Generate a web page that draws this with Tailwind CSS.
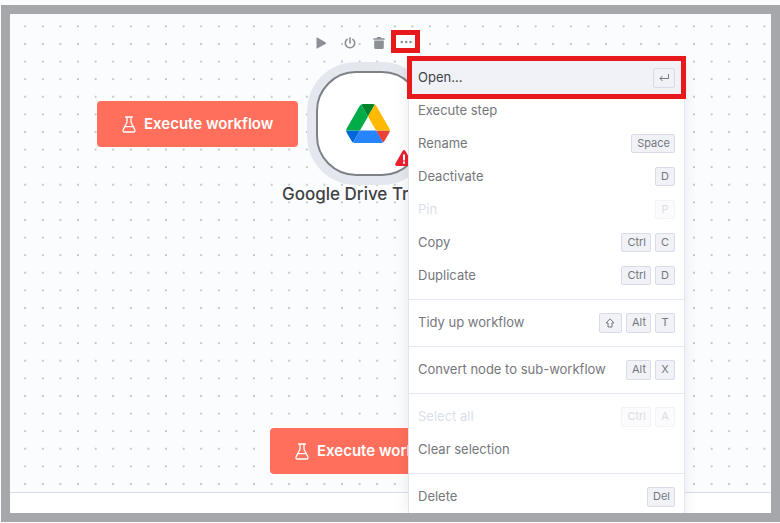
<!DOCTYPE html>
<html lang="en">
<head>
  <meta charset="utf-8">
  <meta name="viewport" content="width=device-width, initial-scale=1">
  <title>Workflow editor</title>
  <script src="https://cdn.jsdelivr.net/npm/@tailwindcss/browser@4"></script>
</head>
<body class="flex h-screen flex-col overflow-hidden bg-[#fbfcfe] pt-[5px] pb-px pl-px font-['Inter',sans-serif]">
  <svg class="hidden">
    <symbol id="flask" viewBox="0 0 14 17">
      <path d="M3.6 1h6.800M5 1v5.200L1.200 13.600Q.4 16 2.600 16h8.800q2.200 0 1.400-2.400L9 6.200V1M3 10.600h8" fill="none" stroke="currentColor" stroke-width="1.3" stroke-linejoin="round" stroke-linecap="round" />
    </symbol>
  </svg>

  <div class="relative flex min-h-0 flex-1 flex-col overflow-hidden border-[9px] border-[#a6a7ab] bg-white">
    <main class="relative flex-1 overflow-hidden border-b border-[#d9dce8] bg-[#fbfcfe]">
      <svg class="absolute inset-0 size-full" aria-hidden="true">
        <defs>
          <pattern id="grid" x="6.4" y="3.5" width="17.6" height="17.6" patternUnits="userSpaceOnUse">
            <circle cx="8.8" cy="8.8" r=".85" fill="#94969e" />
          </pattern>
        </defs>
        <rect width="100%" height="100%" fill="url(#grid)" />
      </svg>

      <!-- canvas buttons -->
      <button class="absolute top-[87px] left-[87px] flex h-[46px] items-center gap-2 rounded bg-[#ff6f5c] px-[25px] font-semibold text-white">
        <svg class="h-[17px] w-[14px]"><use href="#flask" /></svg>
        <span class="text-[15px] whitespace-nowrap">Execute workflow</span>
      </button>
      <button class="absolute top-[414px] left-[260px] flex h-[46px] items-center gap-2 rounded bg-[#ff6f5c] px-[25px] font-semibold text-white">
        <svg class="h-[17px] w-[14px]"><use href="#flask" /></svg>
        <span class="text-[15px] whitespace-nowrap">Execute workflow</span>
      </button>

      <!-- node toolbar -->
      <div class="absolute top-[16px] left-[302px] flex items-center text-[#8d8f96]">
        <button class="flex h-[26px] w-[29px] items-center pl-[3px]" aria-label="Execute step">
          <svg class="size-3" viewBox="0 0 12 12"><path d="M1.500 1v10q0 .8.8.4l8.500-5q.6-.4 0-.8l-8.500-5Q1.500.2 1.500 1z" fill="currentColor" /></svg>
        </button>
        <button class="flex h-[26px] w-[29px] items-center pl-[3px]" aria-label="Deactivate">
          <svg class="size-3" viewBox="0 0 12 12" fill="none" stroke="currentColor" stroke-width="1.6" stroke-linecap="round"><path d="M6 .9v5M3.1 2.4a4.7 4.7 0 1 0 5.8 0" /></svg>
        </button>
        <button class="flex h-[26px] w-[29px] items-center pl-[3px]" aria-label="Delete">
          <svg class="size-3" viewBox="0 0 12 12" fill="currentColor"><path d="M.3 1.200h3.200L4.200.1h3.600l.7 1.100h3.200v1.500H.3zM1.200 3.500h9.600v7q0 1.500-1.500 1.500H2.700q-1.500 0-1.500-1.500z" /></svg>
        </button>
      </div>
      <button class="absolute top-[16px] left-[381px] flex h-[23px] w-[29px] items-center justify-center border-[5px] border-[#e8191c] bg-[#fbfcfe] pt-px text-[#8d8f96]" aria-label="More actions">
        <svg class="h-1 w-3 shrink-0" viewBox="0 0 12 4" fill="currentColor"><circle cx="1.8" cy="2" r="1.3" /><circle cx="6.2" cy="2" r="1.3" /><circle cx="10.6" cy="2" r="1.3" /></svg>
      </button>

      <!-- node -->
      <div class="absolute top-[57px] left-[306px] flex h-[105px] w-[106px] items-center justify-center rounded-[40px] border-2 border-[#7e8186] bg-white pr-[2px] shadow-[0_0_0_9px_#e5e7ef]">
        <svg class="h-[39px] w-[44px]" viewBox="0 0 87.3 78">
          <path d="m6.6 66.85 3.85 6.65c.8 1.4 1.95 2.5 3.3 3.3l13.75-23.8h-27.5c0 1.55.4 3.1 1.2 4.5z" fill="#0066da" />
          <path d="m43.65 25-13.75-23.8c-1.35.8-2.5 1.9-3.3 3.3l-25.4 44a9.06 9.06 0 0 0 -1.2 4.5h27.5z" fill="#00ac47" />
          <path d="m73.55 76.8c1.35-.8 2.5-1.9 3.3-3.3l1.6-2.75 7.65-13.25c.8-1.4 1.2-2.95 1.2-4.5h-27.502l5.852 11.5z" fill="#ea4335" />
          <path d="m43.65 25 13.75-23.8c-1.35-.8-2.9-1.2-4.5-1.2h-18.5c-1.6 0-3.15.45-4.5 1.2z" fill="#00832d" />
          <path d="m59.8 53h-32.3l-13.75 23.8c1.35.8 2.9 1.2 4.5 1.2h50.8c1.6 0 3.15-.45 4.5-1.2z" fill="#2684fc" />
          <path d="m73.4 26.5-12.7-22c-.8-1.4-1.95-2.5-3.3-3.3l-13.75 23.8 16.15 28h27.45c0-1.55-.4-3.1-1.2-4.5z" fill="#ffba00" />
        </svg>
        <svg class="absolute right-[7px] bottom-2 h-4 w-[18px]" viewBox="0 0 18 16">
          <path d="M7.6 1Q9-.8 10.4 1l7.2 12.5Q18.300 16 16 16H2Q-.3 16 .4 13.500z" fill="#ea1f30" />
          <path d="M9 5.200v4.600M9 12.300v.6" stroke="#fff" stroke-width="2" stroke-linecap="round" />
        </svg>
      </div>
      <p class="absolute top-[168px] left-[272px] text-[17px] leading-6 font-medium whitespace-nowrap text-[#414244]">Google Drive Trigger</p>
    </main>
    <footer class="h-5 bg-white"></footer>

    <!-- context menu -->
    <div class="absolute top-[46px] left-[398px] w-[277px] border border-[#e3e5f0] bg-white text-[13px] text-[#75777d] shadow-[0_2px_14px_rgba(0,0,0,0.08)]">
      <ul>
        <li class="relative">
          <button class="flex h-[33px] w-full items-center justify-between bg-[#f1f2f8] px-[9px] text-[#414244]">
            Open...
            <kbd class="flex h-5 w-[22px] items-center justify-center rounded-xs border border-[#d9dce8] bg-[#f1f2f8] text-[#75777d]">
              <svg class="h-2 w-[10px]" viewBox="0 0 10 8" fill="none" stroke="currentColor"><path d="M9.500 0v4.500H1M3.500 2L1 4.500 3.500 7" /></svg>
            </kbd>
          </button>
          <span class="pointer-events-none absolute -inset-x-[2px] -inset-y-[5px] border-[5px] border-[#e8191c]"></span>
        </li>
        <li>
          <button class="flex h-[33px] w-full items-center justify-between px-[9px]">Execute step</button>
        </li>
        <li>
          <button class="flex h-[33px] w-full items-center justify-between px-[9px]">
            Rename
            <kbd class="flex h-[19px] items-center rounded-xs border border-[#d9dce8] bg-[#f1f2f8] pr-1 pl-[5px] font-['Inter',sans-serif] text-[11px]">Space</kbd>
          </button>
        </li>
        <li>
          <button class="flex h-[33px] w-full items-center justify-between px-[9px]">
            Deactivate
            <kbd class="flex h-[19px] w-5 items-center justify-center rounded-xs border border-[#d9dce8] bg-[#f1f2f8] font-['Inter',sans-serif] text-[11px]">D</kbd>
          </button>
        </li>
        <li>
          <button class="flex h-[33px] w-full items-center justify-between px-[9px] text-[#dadfe9]" disabled>
            Pin
            <kbd class="flex h-[19px] w-5 items-center justify-center rounded-xs border border-[#f2f3f7] bg-[#fbfbfd] font-['Inter',sans-serif] text-[11px] text-[#dcdde0]">P</kbd>
          </button>
        </li>
        <li>
          <button class="flex h-[33px] w-full items-center justify-between px-[9px]">
            Copy
            <span class="flex gap-1">
              <kbd class="flex h-[19px] items-center rounded-xs border border-[#d9dce8] bg-[#f1f2f8] pr-1 pl-[5px] font-['Inter',sans-serif] text-[11px]">Ctrl</kbd>
              <kbd class="flex h-[19px] w-5 items-center justify-center rounded-xs border border-[#d9dce8] bg-[#f1f2f8] font-['Inter',sans-serif] text-[11px]">C</kbd>
            </span>
          </button>
        </li>
        <li>
          <button class="flex h-[33px] w-full items-center justify-between px-[9px]">
            Duplicate
            <span class="flex gap-1">
              <kbd class="flex h-[19px] items-center rounded-xs border border-[#d9dce8] bg-[#f1f2f8] pr-1 pl-[5px] font-['Inter',sans-serif] text-[11px]">Ctrl</kbd>
              <kbd class="flex h-[19px] w-5 items-center justify-center rounded-xs border border-[#d9dce8] bg-[#f1f2f8] font-['Inter',sans-serif] text-[11px]">D</kbd>
            </span>
          </button>
        </li>
        <li class="mt-[7px] border-t border-[#e6e8f2] pt-[6px]">
          <button class="flex h-[33px] w-full items-center justify-between px-[9px]">
            Tidy up workflow
            <span class="flex gap-1">
              <kbd class="flex h-5 w-[23px] items-center justify-center rounded-xs border border-[#d9dce8] bg-[#f1f2f8]">
                <svg class="size-[10px]" viewBox="0 0 10 10" fill="none" stroke="currentColor" stroke-linejoin="round"><path d="M5 .8l4 4.200H7v4H3V5H1z" /></svg>
              </kbd>
              <kbd class="flex h-5 items-center rounded-xs border border-[#d9dce8] bg-[#f1f2f8] pr-1 pl-[5px] font-['Inter',sans-serif] text-[11px]">Alt</kbd>
              <kbd class="flex h-5 w-5 items-center justify-center rounded-xs border border-[#d9dce8] bg-[#f1f2f8] font-['Inter',sans-serif] text-[11px]">T</kbd>
            </span>
          </button>
        </li>
        <li class="mt-[7px] border-t border-[#e6e8f2] pt-[6px]">
          <button class="flex h-[33px] w-full items-center justify-between px-[9px]">
            Convert node to sub-workflow
            <span class="flex gap-1">
              <kbd class="flex h-5 items-center rounded-xs border border-[#d9dce8] bg-[#f1f2f8] pr-1 pl-[5px] font-['Inter',sans-serif] text-[11px]">Alt</kbd>
              <kbd class="flex h-5 w-5 items-center justify-center rounded-xs border border-[#d9dce8] bg-[#f1f2f8] font-['Inter',sans-serif] text-[11px]">X</kbd>
            </span>
          </button>
        </li>
        <li class="mt-[7px] border-t border-[#e6e8f2] pt-[6px]">
          <button class="flex h-[33px] w-full items-center justify-between px-[9px] text-[#dadfe9]" disabled>
            Select all
            <span class="flex gap-1 text-[#dcdde0]">
              <kbd class="flex h-5 items-center rounded-xs border border-[#f2f3f7] bg-[#fbfbfd] pr-1 pl-[5px] font-['Inter',sans-serif] text-[11px]">Ctrl</kbd>
              <kbd class="flex h-5 w-5 items-center justify-center rounded-xs border border-[#f2f3f7] bg-[#fbfbfd] font-['Inter',sans-serif] text-[11px]">A</kbd>
            </span>
          </button>
        </li>
        <li>
          <button class="flex h-[33px] w-full items-center justify-between px-[9px]">Clear selection</button>
        </li>
        <li class="mt-[7px] border-t border-[#e6e8f2] pt-[6px]">
          <button class="flex h-[33px] w-full items-center justify-between px-[9px]">
            Delete
            <kbd class="flex h-5 items-center rounded-xs border border-[#d9dce8] bg-[#f1f2f8] pr-1 pl-[5px] font-['Inter',sans-serif] text-[11px]">Del</kbd>
          </button>
        </li>
      </ul>
    </div>
  </div>
</body>
</html>
